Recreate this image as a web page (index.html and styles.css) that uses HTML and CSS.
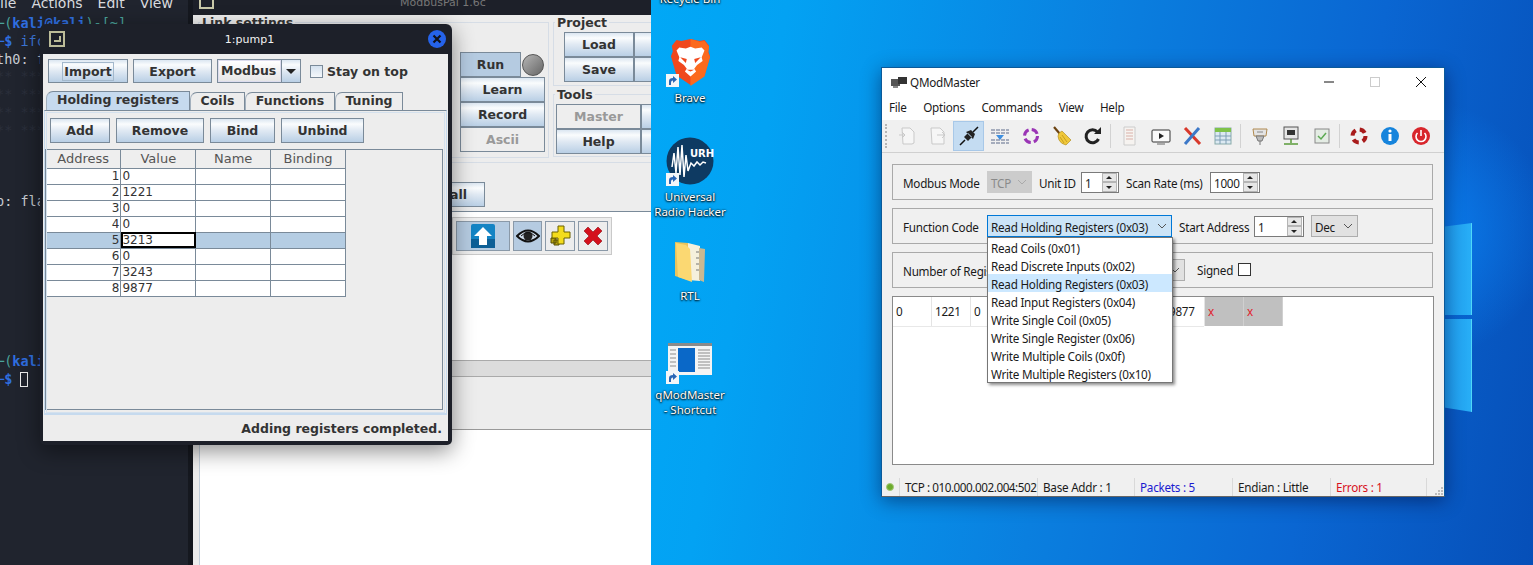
FILE: index.html
```html
<!DOCTYPE html>
<html lang="en">
<head>
    <meta charset="UTF-8">
    <title>QModMaster and ModbusPal</title>
    <link rel="stylesheet" href="styles.css">
</head>
<body>
    <svg class="defs" width="0" height="0">
        <symbol id="chev" viewBox="0 0 10 6"><path d="M1 1l4 4 4-4" fill="none" stroke="currentColor"/></symbol>
        <symbol id="shortcut" viewBox="0 0 13 13">
            <rect width="13" height="13" fill="#f4f6f8"/>
            <path d="M3 11V7q0-3 4-3V2l4 3.500L7 9V6.500q-2 0-2 2v2.500z" fill="#2a66b5"/>
        </symbol>
    </svg>

    <!-- Kali side -->
    <section class="kali">
        <div class="terminal">
            <div class="term-menu"><span>ile</span><span>Actions</span><span>Edit</span><span>View</span><span>H</span></div>
            <pre class="term-text"><span class="t-green">─(</span><span class="t-blue">kali@kali</span><span class="t-green">)-[~]</span>
<span class="t-blue">─$</span> <span class="t-dim">ifconfig</span>
th0: flags
<span class="t-faint">** ****
** ****
** ****
** ****</span>



p: flags=73








<span class="t-green">─(</span><span class="t-blue">kali@kali</span><span class="t-green">)-[~]</span>
<span class="t-blue">─$</span> <span class="cursor"></span></pre>
        </div>

        <div class="mp-window">
            <div class="mp-title">
                <span class="mp-pin"></span>
                <span class="mp-name">ModbusPal 1.6c</span>
            </div>
            <div class="mp-top">
                <fieldset class="mp-group mp-link">
                    <legend>Link settings</legend>
                    <div class="run-panel">
                        <div class="run-row">
                            <button class="jbtn is-pressed">Run</button>
                            <span class="lamp"></span>
                        </div>
                        <button class="jbtn">Learn</button>
                        <button class="jbtn">Record</button>
                        <button class="jbtn" disabled>Ascii</button>
                    </div>
                </fieldset>
                <div class="mp-side">
                    <fieldset class="mp-group mp-project">
                        <legend>Project</legend>
                        <div class="side-grid">
                            <button class="jbtn">Load</button><button class="jbtn">&nbsp;</button>
                            <button class="jbtn">Save</button><button class="jbtn">&nbsp;</button>
                        </div>
                    </fieldset>
                    <fieldset class="mp-group mp-tools">
                        <legend>Tools</legend>
                        <div class="side-grid tools-grid">
                            <button class="jbtn" disabled>Master</button><button class="jbtn">&nbsp;</button>
                            <button class="jbtn">Help</button><button class="jbtn">&nbsp;</button>
                        </div>
                    </fieldset>
                </div>
            </div>
            <div class="mp-slaves">
                <div class="mp-slaves-bar"><button class="jbtn all-btn">Enable all</button></div>
                <div class="mp-list">
                    <div class="mp-strip">
                        <button class="strip-btn wide">
                            <svg width="26" height="26" viewBox="0 0 26 26"><rect x="1" y="1" width="24" height="24" rx="2" fill="#1484c4"/><rect x="1" y="16" width="24" height="9" fill="#0d5f96"/><path d="M13 4l9 9h-5v9H9v-9H4z" fill="#fff"/></svg>
                        </button>
                        <button class="strip-btn">
                            <svg width="24" height="16" viewBox="0 0 24 16"><path d="M1 8q11-11 22 0q-11 11-22 0z" fill="#cfdcea" stroke="#111" stroke-width="2"/><circle cx="12" cy="8" r="4.500" fill="#222"/><path d="M5 8q7-7 14 0" fill="none" stroke="#111"/></svg>
                        </button>
                        <button class="strip-btn plain">
                            <svg width="24" height="24" viewBox="0 0 24 24"><path d="M6 16h5v5h-5zM3 14h5v5H3z" fill="#b8a210" stroke="#554c00"/><path d="M10 2h6v6h6v6h-6v6h-6v-6H4V8h6z" fill="#f4dc1c" stroke="#6b6000"/></svg>
                        </button>
                        <button class="strip-btn plain">
                            <svg width="22" height="22" viewBox="0 0 22 22"><path d="M2 6l4-4 5 5 5-5 4 4-5 5 5 5-4 4-5-5-5 5-4-4 5-5z" fill="#d4101c" stroke="#8d0d14" stroke-width=".6"/></svg>
                        </button>
                    </div>
                </div>
                <div class="mp-split"></div>
                <div class="mp-console"></div>
                <div class="mp-white"></div>
            </div>
        </div>

        <div class="pump-window">
            <div class="pump-title">
                <span class="pump-pin"></span>
                <span class="pump-name">1:pump1</span>
                <span class="pump-close">
                    <svg width="12" height="12" viewBox="0 0 12 12"><path d="M2.500 2.500l7 7M9.500 2.500l-7 7" stroke="#10131c" stroke-width="2.200"/></svg>
                </span>
            </div>
            <div class="pump-body">
                <div class="pump-bar">
                    <button class="jbtn is-focus"><span>Import</span></button>
                    <button class="jbtn">Export</button>
                    <div class="jcombo">
                        <span class="jcombo-text">Modbus</span>
                        <span class="jcombo-arrow"></span>
                    </div>
                    <label class="jcheck"><span class="jcheck-box"></span>Stay on top</label>
                </div>
                <div class="tabs">
                    <span class="tab is-active">Holding registers</span>
                    <span class="tab">Coils</span>
                    <span class="tab">Functions</span>
                    <span class="tab">Tuning</span>
                </div>
                <div class="tab-panel">
                    <div class="reg-bar">
                        <button class="jbtn">Add</button>
                        <button class="jbtn">Remove</button>
                        <button class="jbtn">Bind</button>
                        <button class="jbtn">Unbind</button>
                    </div>
                    <div class="reg-box">
                        <table class="reg-table">
                            <thead>
                                <tr><th>Address</th><th>Value</th><th>Name</th><th>Binding</th></tr>
                            </thead>
                            <tbody>
                                <tr><td class="num">1</td><td>0</td><td></td><td></td></tr>
                                <tr><td class="num">2</td><td>1221</td><td></td><td></td></tr>
                                <tr><td class="num">3</td><td>0</td><td></td><td></td></tr>
                                <tr><td class="num">4</td><td>0</td><td></td><td></td></tr>
                                <tr class="is-selected"><td class="num">5</td><td class="is-editing">3213</td><td></td><td></td></tr>
                                <tr><td class="num">6</td><td>0</td><td></td><td></td></tr>
                                <tr><td class="num">7</td><td>3243</td><td></td><td></td></tr>
                                <tr><td class="num">8</td><td>9877</td><td></td><td></td></tr>
                            </tbody>
                        </table>
                    </div>
                </div>
                <div class="pump-status">Adding registers completed.</div>
            </div>
        </div>
    </section>

    <!-- Windows side -->
    <section class="desktop">
        <div class="win-logo">
            <span class="pane pane-top"></span>
            <span class="pane pane-bottom"></span>
        </div>

        <div class="desk-icons">
            <div class="desk-icon">
                <span class="desk-art"></span>
                <span class="desk-label">Recycle Bin</span>
            </div>
            <div class="desk-icon">
                <span class="desk-art">
                    <svg width="41" height="48" viewBox="0 0 44 50" preserveAspectRatio="none">
                        <path d="M22 1l10 2 5-1 5 6-1 6 2 5-6 20-15 10-15-10L1 19l2-5-1-6 5-6 5 1z" fill="#f0481e"/>
                        <path d="M22 50l15-10 6-20-2-5 1-6-5-6-5 1-10-3z" fill="#fb6a1e"/>
                        <path d="M22 9l5 2 7-1 3 3-3 7 1 4-6 4-3 4 2 3-6 5-6-5 2-3-3-4-6-4 1-4-3-7 3-3 7 1z" fill="#fff"/>
                        <path d="M11 20l7 2-1 4zM33 20l-7 2 1 4zM18 33h8l-4 2z" fill="#f0481e"/>
                    </svg>
                    <svg class="shortcut"><use href="#shortcut"/></svg>
                </span>
                <span class="desk-label">Brave</span>
            </div>
            <div class="desk-icon">
                <span class="desk-art">
                    <svg width="48" height="48" viewBox="0 0 48 48">
                        <circle cx="24" cy="24" r="23.500" fill="#0e3a62"/>
                        <path d="M6 30l2-14 2 20 2-26 2 28 2-30 2 32 2-22 2 16 3-8 3 3 3-4 3 3 3-3 3 1" fill="none" stroke="#fff" stroke-width="1.500"/>
                        <text class="urh-text" x="24" y="20">URH</text>
                    </svg>
                    <svg class="shortcut"><use href="#shortcut"/></svg>
                </span>
                <span class="desk-label">Universal<br>Radio Hacker</span>
            </div>
            <div class="desk-icon">
                <span class="desk-art art-folder">
                    <svg width="34" height="44" viewBox="0 0 34 44">
                        <path d="M2 2l13 1v37L2 36z" fill="#e9c35c"/>
                        <path d="M15 3l12 3v35l-12-1z" fill="#f5f0dc"/>
                        <path d="M26 8l6 1-1 33-5-2z" fill="#c9b892"/>
                        <path d="M3 3l10 2 4 4 2 33-14-5z" fill="#fbd872"/>
                        <path d="M23 12h3M23 18h3M23 24h3M23 30h3" stroke="#777"/>
                    </svg>
                </span>
                <span class="desk-label">RTL</span>
            </div>
            <div class="desk-icon">
                <span class="desk-art">
                    <svg width="44" height="32" viewBox="0 0 44 32">
                        <rect width="44" height="32" fill="#f4f4f4"/>
                        <rect width="44" height="3" fill="#8a8a8a"/>
                        <rect x="10" y="5" width="17" height="24" fill="#0a68c8"/>
                        <path d="M2 7h6M2 11h6M2 15h6M2 19h6M2 23h6M30 7h12M30 10h12M30 13h12M30 16h12M30 19h12M30 22h12M30 25h12" stroke="#8c8c8c"/>
                    </svg>
                    <svg class="shortcut"><use href="#shortcut"/></svg>
                </span>
                <span class="desk-label">qModMaster<br>- Shortcut</span>
            </div>
        </div>

        <div class="qm-window">
            <div class="qm-title">
                <svg width="16" height="12" viewBox="0 0 16 12"><rect x="0" y="3" width="9" height="7" fill="#555"/><rect x="7" y="1" width="9" height="7" fill="#333"/><rect x="2" y="10" width="5" height="2" fill="#888"/></svg>
                <span class="qm-name">QModMaster</span>
                <span class="caption">
                    <svg width="12" height="12" viewBox="0 0 12 12"><path d="M1 6h10" stroke="#111"/></svg>
                </span>
                <span class="caption">
                    <svg width="12" height="12" viewBox="0 0 12 12"><rect x="1.500" y="1.500" width="9" height="9" fill="none" stroke="#ccc"/></svg>
                </span>
                <span class="caption">
                    <svg width="12" height="12" viewBox="0 0 12 12"><path d="M1 1l10 10M11 1L1 11" stroke="#111"/></svg>
                </span>
            </div>
            <div class="qm-menu">
                <span>File</span><span>Options</span><span>Commands</span><span>View</span><span>Help</span>
            </div>
            <div class="qm-tools">
                <span class="grip"></span>
                <span class="tool">
                    <svg viewBox="0 0 20 20"><path d="M5 2h8l4 4v11l-2 1H6zM2 9h6M5 6l3 3-3 3" fill="#f6f6f6" stroke="#c9c9c9"/></svg>
                </span>
                <span class="tool">
                    <svg viewBox="0 0 20 20"><path d="M3 2h9l4 4v12H4zM9 9h8M14 6l3 3-3 3" fill="#f6f6f6" stroke="#c9c9c9"/></svg>
                </span>
                <span class="tool is-on">
                    <svg viewBox="0 0 20 20"><path d="M1 19l5-5M14 6l5-5" stroke="#111" stroke-width="1.500"/><path d="M5 11l4-4 4 4-4 4zM8 14l-3-3 2-2 4 4zM7 6l7 7 2-5-4-4z" fill="#222"/></svg>
                </span>
                <span class="tool">
                    <svg viewBox="0 0 20 20"><path d="M1 4h18M1 7h18M1 14h18M1 17h18" stroke="#5d6b8a" stroke-dasharray="4 1"/><path d="M6 9h8l-4 5z" fill="#3f8fe0"/></svg>
                </span>
                <span class="tool">
                    <svg viewBox="0 0 20 20"><circle cx="10" cy="10" r="6.500" fill="none" stroke="#9a35b5" stroke-width="3" stroke-dasharray="7 3.200"/></svg>
                </span>
                <span class="tool">
                    <svg viewBox="0 0 20 20"><path d="M2 1l6 7" stroke="#6b4210" stroke-width="2.200"/><path d="M7 7l3-2 9 9-5 5q-5-1-7-5t0-7z" fill="#f0c83a" stroke="#a8851c" stroke-width=".6"/><path d="M10 9l5 7M8 11l4 6" stroke="#c79f22"/></svg>
                </span>
                <span class="tool">
                    <svg viewBox="0 0 20 20"><path d="M15.500 13a6.500 6.500 0 1 1-1-7" fill="none" stroke="#222" stroke-width="3"/><path d="M11 8h7V1z" fill="#222"/></svg>
                </span>
                <span class="tool-sep"></span>
                <span class="tool">
                    <svg viewBox="0 0 20 20"><path d="M4 1h11v18H4z" fill="#f6f3f0" stroke="#ccc"/><path d="M6 4h7M6 7h7M6 10h7M6 13h7" stroke="#d9b0a8"/></svg>
                </span>
                <span class="tool">
                    <svg viewBox="0 0 20 20"><rect x="1" y="4" width="18" height="12" rx="1" fill="#fafafa" stroke="#333"/><path d="M8 7l5 3-5 3z" fill="#222"/><path d="M6 18h8" stroke="#666"/></svg>
                </span>
                <span class="tool">
                    <svg viewBox="0 0 20 20"><path d="M3 2l15 16" stroke="#d8392c" stroke-width="3"/><path d="M17 2L3 18" stroke="#3c78c8" stroke-width="3"/></svg>
                </span>
                <span class="tool">
                    <svg viewBox="0 0 20 20"><rect x="2" y="2" width="16" height="16" fill="#dce9f2" stroke="#8aa"/><rect x="2" y="2" width="16" height="4" fill="#7fc24a"/><path d="M2 10h16M2 14h16M7 6v12M13 6v12" stroke="#7f9fb5"/></svg>
                </span>
                <span class="tool-sep"></span>
                <span class="tool">
                    <svg viewBox="0 0 20 20"><path d="M3 3h14l-1 7H4z" fill="#e3e3e3" stroke="#b08a50"/><path d="M6 10h8l-2 5h-4zM10 15v4" fill="#bbb" stroke="#777"/><path d="M7 6h6" stroke="#888"/></svg>
                </span>
                <span class="tool">
                    <svg viewBox="0 0 20 20"><rect x="3" y="1" width="14" height="12" fill="#e6e6e6" stroke="#555"/><rect x="6" y="4" width="8" height="5" fill="#333"/><path d="M10 13v4M3 18h14" stroke="#5a9a3a" stroke-width="1.500"/></svg>
                </span>
                <span class="tool">
                    <svg viewBox="0 0 20 20"><rect x="3" y="3" width="14" height="14" fill="#e4ece4" stroke="#888"/><path d="M6 10l3 3 5-6" fill="none" stroke="#5caa52" stroke-width="1.500"/></svg>
                </span>
                <span class="tool-sep"></span>
                <span class="tool">
                    <svg viewBox="0 0 20 20"><circle cx="10" cy="10" r="6.500" fill="none" stroke="#f4f4f4" stroke-width="4"/><circle cx="10" cy="10" r="6.500" fill="none" stroke="#a81c1c" stroke-width="4" stroke-dasharray="6 4.200"/></svg>
                </span>
                <span class="tool">
                    <svg viewBox="0 0 20 20"><circle cx="10" cy="10" r="9" fill="#1684dc"/><path d="M10 8v7" stroke="#fff" stroke-width="3"/><circle cx="10" cy="5" r="1.600" fill="#fff"/></svg>
                </span>
                <span class="tool">
                    <svg viewBox="0 0 20 20"><circle cx="10" cy="10" r="9" fill="#d8262c"/><path d="M6.500 7a5 5 0 1 0 7 0" fill="none" stroke="#fff" stroke-width="1.600"/><path d="M10 4v6" stroke="#fff" stroke-width="1.600"/></svg>
                </span>
            </div>

            <div class="qm-body">
                <div class="qm-row">
                    <span class="lbl-first">Modbus Mode</span>
                    <div class="combo combo-off combo-mode"><span>TCP</span><svg class="chev"><use href="#chev"/></svg></div>
                    <span class="lbl-unit">Unit ID</span>
                    <div class="spin spin-unit"><span>1</span><span class="spin-btns"><i class="up"></i><i class="down"></i></span></div>
                    <span class="lbl-scan">Scan Rate (ms)</span>
                    <div class="spin spin-wide"><span>1000</span><span class="spin-btns"><i class="up"></i><i class="down"></i></span></div>
                </div>
                <div class="qm-row">
                    <span class="lbl-first">Function Code</span>
                    <div class="combo-wrap">
                        <div class="combo combo-open"><span>Read Holding Registers (0x03)</span><svg class="chev"><use href="#chev"/></svg></div>
                        <ul class="combo-list">
                            <li>Read Coils (0x01)</li>
                            <li>Read Discrete Inputs (0x02)</li>
                            <li class="is-hover">Read Holding Registers (0x03)</li>
                            <li>Read Input Registers (0x04)</li>
                            <li>Write Single Coil (0x05)</li>
                            <li>Write Single Register (0x06)</li>
                            <li>Write Multiple Coils (0x0f)</li>
                            <li>Write Multiple Registers (0x10)</li>
                        </ul>
                    </div>
                    <span class="lbl-start">Start Address</span>
                    <div class="spin spin-wide"><span>1</span><span class="spin-btns"><i class="up"></i><i class="down"></i></span></div>
                    <div class="combo combo-dec"><span>Dec</span><svg class="chev"><use href="#chev"/></svg></div>
                </div>
                <div class="qm-row">
                    <span class="lbl-first lbl-clip">Number of Registers</span>
                    <div class="combo combo-regs"><span></span><svg class="chev"><use href="#chev"/></svg></div>
                    <span class="signed">Signed</span>
                    <span class="check"></span>
                </div>
                <div class="qm-data">
                    <div class="data-row">
                        <span>0</span><span>1221</span><span>0</span><span></span><span></span><span></span><span></span><span class="cell-end">9877</span>
                        <span class="is-err">x</span><span class="is-err">x</span>
                    </div>
                </div>
            </div>

            <div class="qm-status">
                <span class="led"></span>
                <span class="st st-conn">TCP : 010.000.002.004:502</span>
                <span class="st st-base">Base Addr : 1</span>
                <span class="st st-packets">Packets : 5</span>
                <span class="st st-endian">Endian : Little</span>
                <span class="st st-errors">Errors : 1</span>
                <span class="st st-grip">
                    <svg width="8" height="8" viewBox="0 0 8 8"><path d="M6 0h2v2H6zM3 3h2v2H3zM6 3h2v2H6zM0 6h2v2H0zM3 6h2v2H3zM6 6h2v2H6z" fill="#bcbcbc"/></svg>
                </span>
            </div>
        </div>
    </section>
</body>
</html>
```

FILE: styles.css
```css
* {
    box-sizing: border-box;
}

html, body {
    height: 100%;
}

body {
    margin: 0;
    display: flex;
    overflow: hidden;
    background-color: #20242e;
    font-family: "Noto Sans", sans-serif;
}

.defs {
    position: absolute;
}

/* Kali side */
.kali {
    position: relative;
    width: 651px;
    height: 565px;
    flex: none;
    overflow: hidden;
    background-color: #20242e;
}

.terminal {
    width: 190px;
    height: 565px;
    color: #c8ccd2;
}

.term-menu {
    display: flex;
    gap: 15px;
    height: 10px;
    font: 14px "DejaVu Sans", sans-serif;
    line-height: 6px;
    color: #d8dade;
    overflow: hidden;
    white-space: nowrap;
}

.term-text {
    margin: 5px 0 0 -4px;
    font: 13.500px/17.800px "DejaVu Sans Mono", monospace;
}

.t-green { color: #4aa39a; }
.t-blue { color: #2f6fe0; font-weight: bold; }
.t-dim { color: #3d77d8; }
.t-faint { color: #2a2f3b; }

.cursor {
    display: inline-block;
    width: 8px;
    height: 15px;
    border: 1px solid #eee;
    vertical-align: -3px;
}

/* ModbusPal window */
.mp-window {
    position: absolute;
    left: 188px;
    top: 0;
    width: 470px;
    height: 565px;
    display: flex;
    flex-direction: column;
    background-color: #ededed;
    border-left: 5px solid #15181f;
    font: bold 12.500px "DejaVu Sans", sans-serif;
    color: #333;
}

.mp-title {
    display: flex;
    height: 15px;
    flex: none;
    padding-left: 6px;
    background-color: #1d2029;
    overflow: hidden;
}

.mp-pin {
    width: 15px;
    height: 9px;
    border: 2px solid #c8c8a8;
    border-top: 0;
}

.mp-name {
    margin-left: 186px;
    font-weight: normal;
    font-size: 11px;
    line-height: 5px;
    color: #777;
}

.mp-top {
    display: flex;
    flex: none;
    height: 147px;
    padding: 0 0 0 5px;
    gap: 4px;
}

.mp-group {
    margin: 0;
    border: 1px solid #d6dde6;
    padding: 0;
    min-width: 0;
    flex: none;
}

.mp-group legend {
    padding: 0 2px;
    margin-left: 1px;
    font-size: 12.500px;
    line-height: 15px;
}

.mp-link {
    width: 351px;
    height: 143px;
    display: flex;
    justify-content: flex-end;
}

.run-panel {
    width: 85px;
    margin: 22px 3px 0 auto;
    display: flex;
    flex-direction: column;
}

.run-row {
    display: flex;
    align-items: center;
    gap: 1px;
}

.run-row .jbtn {
    width: 61px;
}

.lamp {
    width: 22px;
    height: 22px;
    border-radius: 50%;
    border: 1px solid #555;
    background: linear-gradient(135deg, #b5b5b5, #666);
}

.jbtn {
    height: 25px;
    padding: 0;
    border: 1px solid #7a8a99;
    background: linear-gradient(#dbe6f1 0%, #fafcfd 22%, #e0e9f3 50%, #b9cfe5 100%);
    font: bold 12.500px "DejaVu Sans", sans-serif;
    color: #333;
    white-space: nowrap;
    overflow: hidden;
}

.jbtn:disabled {
    background: #eeeeee;
    color: #999;
}

.jbtn.is-pressed {
    background: #b5cbe1;
}

.jbtn.is-focus span {
    border: 1px solid #a3b8cc;
    padding: 1px;
}

.mp-side {
    width: 130px;
    flex: none;
    display: flex;
    flex-direction: column;
    gap: 1px;
}

.mp-project {
    height: 71px;
}

.mp-tools {
    height: 70px;
}

.side-grid {
    display: grid;
    grid-template-columns: 70px 70px;
    margin: 2px 0 0 10px;
}

.tools-grid {
    grid-template-columns: 85px 70px;
    margin: 2px 0 0 2px;
}

.mp-slaves {
    flex: 1;
    display: flex;
    flex-direction: column;
    min-height: 0;
}

.mp-slaves-bar {
    height: 50px;
    flex: none;
    border-top: 1px solid #d6dde6;
    border-bottom: 1px solid #7a8a99;
    padding: 19px 0 0 187px;
}

.all-btn {
    width: 105px;
}

.mp-list {
    height: 148px;
    flex: none;
    margin-left: 6px;
    background-color: #fff;
    padding: 5px 0 0 253px;
}

.mp-strip {
    display: flex;
    gap: 3px;
    width: 160px;
    height: 38px;
    padding: 3px;
    background-color: #ededed;
    border: 1px solid #c9c9c9;
}

.strip-btn {
    display: flex;
    align-items: center;
    justify-content: center;
    width: 30px;
    padding: 0;
    border: 1px solid #8a99a8;
    background-color: #b5cbe1;
}

.strip-btn.wide {
    width: 54px;
}

.strip-btn.plain {
    background-color: #ededed;
}

.mp-split {
    height: 17px;
    flex: none;
    background-color: #dcdcdc;
    border-top: 1px solid #aaa;
    border-bottom: 1px solid #aaa;
}

.mp-console {
    height: 53px;
    flex: none;
    border-bottom: 1px solid #999;
}

.mp-white {
    flex: 1;
    margin-left: 6px;
    background-color: #fff;
    border-left: 1px solid #c3cfdb;
}

/* pump1 window */
.pump-window {
    position: absolute;
    left: 40px;
    top: 24px;
    width: 412px;
    height: 421px;
    display: flex;
    flex-direction: column;
    padding: 0 4px 4px 3px;
    background-color: #1d2029;
    border-radius: 6px 6px 5px 5px;
    box-shadow: 0 6px 22px rgba(0, 0, 0, 0.45);
    color: #333;
    font: bold 12.500px "DejaVu Sans", sans-serif;
}

.pump-title {
    display: flex;
    align-items: center;
    height: 30px;
    flex: none;
    padding: 0 2px 0 6px;
}

.pump-pin {
    position: relative;
    width: 16px;
    height: 16px;
    border: 2px solid #bcbc98;
}

.pump-pin::after {
    content: "";
    position: absolute;
    right: 2px;
    bottom: 3px;
    width: 5px;
    height: 4px;
    border: solid #bcbc98;
    border-width: 0 2px 2px 0;
}

.pump-name {
    flex: 1;
    margin-left: 6px;
    text-align: center;
    font-size: 11px;
    font-weight: normal;
    color: #f2f2f2;
}

.pump-close {
    display: flex;
    align-items: center;
    justify-content: center;
    width: 18px;
    height: 18px;
    border-radius: 50%;
    background-color: #2563eb;
}

.pump-body {
    flex: 1;
    display: flex;
    flex-direction: column;
    background-color: #ededed;
    min-height: 0;
}

.pump-bar {
    display: grid;
    grid-template-columns: 80px 79px 84px auto;
    gap: 5px;
    align-items: start;
    height: 37px;
    flex: none;
    padding: 5px 5px 0;
}

.pump-bar .jbtn {
    height: 24px;
}

.jcombo {
    display: flex;
    height: 24px;
    border: 1px solid #7a8a99;
}

.jcombo-text {
    flex: 1;
    padding-left: 2px;
    line-height: 19px;
    background: linear-gradient(#fff, #e6e6e6);
    border: 1px solid #dde;
}

.jcombo-arrow {
    position: relative;
    width: 19px;
    border-left: 1px solid #7a8a99;
    background: linear-gradient(#dbe6f1 0%, #fafcfd 22%, #e0e9f3 50%, #b9cfe5 100%);
}

.jcombo-arrow::after {
    content: "";
    position: absolute;
    left: 4px;
    top: 9px;
    border: 5px solid transparent;
    border-top-color: #222;
}

.jcheck {
    display: flex;
    align-items: center;
    gap: 4px;
    height: 24px;
    margin-left: 4px;
    white-space: nowrap;
}

.jcheck-box {
    width: 13px;
    height: 13px;
    border: 1px solid #7a8a99;
    background: linear-gradient(#d5e2ef, #f4f7fa);
}

.tabs {
    display: flex;
    height: 19px;
    flex: none;
    padding-left: 3px;
    align-items: flex-end;
}

.tab {
    width: 55px;
    height: 18px;
    text-align: center;
    line-height: 15px;
    border: 1px solid #7a8a99;
    border-bottom: 0;
    border-left-color: #a3b0bd;
    border-top-left-radius: 7px;
}

.tab:nth-child(1) {
    width: 144px;
    height: 19px;
    background-color: #c6daee;
}

.tab:nth-child(3) {
    width: 90px;
}

.tab:nth-child(4) {
    width: 68px;
}

.tab-panel {
    flex: 1;
    min-height: 0;
    display: flex;
    flex-direction: column;
    margin: 0 1px;
    padding: 2px 2px 2px 0;
    border: 1px solid #c6daee;
    border-top: 1px solid #7a8a99;
    border-bottom: 2px solid #c6daee;
    outline: 1px solid #d4e1ee;
    outline-offset: -3px;
}

.reg-bar {
    display: grid;
    grid-template-columns: 60px 88px 65px 83px;
    gap: 6px;
    flex: none;
    height: 36px;
    padding: 5px 0 0 5px;
}

.reg-bar .jbtn {
    height: 25px;
}

.reg-box {
    flex: 1;
    min-height: 0;
    margin-right: 1px;
    border: 1px solid #7a8a99;
    margin-bottom: 1px;
}

.reg-table {
    width: 300px;
    border-collapse: collapse;
    table-layout: fixed;
    font: 12px "DejaVu Sans", sans-serif;
}

.reg-table th {
    height: 18px;
    padding: 0;
    font-size: 13px;
    font-weight: normal;
    color: #555;
    background-color: #eeeeee;
    border: 1px solid #7a8a99;
    border-top: 0;
    border-left: 0;
}

.reg-table td {
    height: 16px;
    padding: 0 1px;
    line-height: 14px;
    color: #333;
    background-color: #fff;
    border: 1px solid #7a8a99;
    border-left: 0;
}

.reg-table td.num {
    text-align: right;
}

.is-selected td {
    background-color: #b5cde3;
}

.reg-table td.is-editing {
    background-color: #fff;
    outline: 2px solid #000;
    outline-offset: -2px;
}

.pump-status {
    height: 26px;
    flex: none;
    padding-right: 6px;
    line-height: 27px;
    text-align: right;
}

/* Windows desktop */
.desktop {
    position: relative;
    flex: 1;
    height: 565px;
    overflow: hidden;
    background:
        radial-gradient(circle at 770px 230px, #0a7ff0 0, rgba(10, 127, 240, 0) 130px),
        linear-gradient(100deg, #01a8f6 0, #03a2f3 14%, #0a7fdf 48%, #0a66d2 75%, #064fb8 100%);
}

.win-logo {
    position: absolute;
    left: 790px;
    top: 223px;
    width: 31px;
    height: 190px;
}

.pane {
    position: absolute;
    right: 0;
    width: 100%;
    background: linear-gradient(90deg, #1e9bf0, #28aef6);
    border-right: 1px solid #4fd8f8;
}

.pane-top {
    top: 0;
    height: 92px;
    clip-path: polygon(0 4px, 100% 0, 100% 100%, 0 100%);
}

.pane-bottom {
    top: 96px;
    height: 93px;
    clip-path: polygon(0 0, 100% 0, 100% 100%, 0 88px);
}

.desk-icons {
    position: absolute;
    left: 0;
    top: -62px;
    display: grid;
    grid-auto-rows: 99px;
    width: 78px;
}

.desk-icon {
    display: flex;
    flex-direction: column;
    align-items: center;
}

.desk-art {
    position: relative;
    display: flex;
    align-items: center;
    justify-content: center;
    width: 48px;
    height: 50px;
    flex: none;
}

.art-folder svg {
    margin-top: 3px;
}

.shortcut {
    position: absolute;
    left: 0;
    bottom: 0;
    width: 13px;
    height: 13px;
}

.urh-text {
    font: bold 10px "DejaVu Sans", sans-serif;
    fill: #fff;
}

.desk-label {
    margin-top: 3px;
    font-size: 11.500px;
    line-height: 15px;
    color: #fff;
    text-align: center;
    white-space: nowrap;
    text-shadow: 0 1px 2px #000, 0 0 2px #000;
}

/* QModMaster window */
.qm-window {
    position: absolute;
    left: 230px;
    top: 67px;
    width: 564px;
    height: 430px;
    display: flex;
    flex-direction: column;
    background-color: #f0f0f0;
    border: 1px solid #0b5a9a;
    border-bottom-color: #666;
    box-shadow: 0 4px 18px rgba(0, 0, 40, 0.45);
    font-size: 11.700px;
    letter-spacing: -0.250px;
    color: #1a1a1a;
}

.qm-title {
    display: flex;
    align-items: center;
    height: 28px;
    flex: none;
    padding-left: 9px;
    background-color: #fff;
}

.qm-name {
    flex: 1;
    margin-left: 3px;
}

.caption {
    display: flex;
    align-items: center;
    justify-content: center;
    width: 46px;
    height: 28px;
}

.qm-menu {
    display: flex;
    gap: 16.500px;
    height: 24px;
    flex: none;
    padding: 3px 0 0 7px;
    background-color: #fff;
}

.qm-tools {
    display: flex;
    align-items: center;
    height: 33px;
    flex: none;
    padding-left: 3px;
    border-bottom: 1px solid #d0d0d0;
}

.grip {
    width: 2px;
    height: 24px;
    margin-right: 4px;
    border-left: 2px dotted #b5b5b5;
}

.tool {
    display: flex;
    align-items: center;
    justify-content: center;
    width: 31px;
    height: 30px;
}

.tool svg {
    width: 20px;
    height: 20px;
}

.tool.is-on {
    background-color: #c4dcf2;
    border: 1px solid #a8c8e8;
}

.tool-sep {
    width: 1px;
    height: 24px;
    margin: 0 3px 0 2px;
    background-color: #d2d2d2;
    flex: none;
}

.qm-body {
    flex: 1;
    display: flex;
    flex-direction: column;
    gap: 8px;
    padding: 11px 11px 0 10px;
    min-height: 0;
}

.qm-row {
    display: flex;
    align-items: center;
    gap: 7px;
    height: 36px;
    flex: none;
    padding-left: 10px;
    border: 1px solid #a9a9a9;
}

.qm-row > span,
.combo > span,
.spin > span:first-child {
    padding-top: 2px;
    white-space: nowrap;
}

.lbl-first {
    width: 77px;
    flex: none;
}

.lbl-clip {
    width: 84px;
    margin-right: -7px;
    overflow: hidden;
}

.lbl-unit {
    width: 35px;
}

.lbl-scan {
    width: 77px;
}

.lbl-start {
    width: 68px;
}

.combo {
    display: flex;
    align-items: center;
    justify-content: space-between;
    height: 22px;
    padding: 0 4px 0 3px;
    border: 1px solid #adadad;
    background-color: #e1e1e1;
}

.chev {
    width: 10px;
    height: 6px;
    color: #555;
    flex: none;
}

.combo-mode {
    width: 45px;
    background-color: #cccccc;
    color: #8a8a8a;
    border-color: #ccc;
}

.combo-off .chev {
    color: #aaa;
}

.combo-wrap {
    position: relative;
    width: 185px;
}

.combo-open {
    background-color: #cce4f7;
    border-color: #0078d7;
}

.combo-dec {
    width: 47px;
}

.combo-regs {
    width: 90px;
    margin-left: 108px;
}

.combo-list {
    position: absolute;
    left: 0;
    top: 22px;
    z-index: 5;
    width: 186px;
    margin: 0;
    padding: 0;
    list-style: none;
    background-color: #fff;
    border: 1px solid #767676;
    box-shadow: 2px 2px 3px rgba(0, 0, 0, 0.45);
}

.combo-list li {
    height: 18px;
    padding-left: 3px;
    line-height: 20px;
    white-space: nowrap;
}

.combo-list .is-hover {
    background-color: #cce8ff;
}

.spin {
    display: flex;
    align-items: center;
    justify-content: space-between;
    height: 21px;
    padding-left: 3px;
    border: 1px solid #7a7a7a;
    background-color: #fff;
}

.spin-unit {
    width: 38px;
}

.spin-wide {
    width: 50px;
}

.spin-btns {
    display: flex;
    flex-direction: column;
    width: 15px;
    height: 19px;
    margin-right: 1px;
}

.spin-btns i {
    position: relative;
    flex: 1;
    background-color: #e6e6e6;
    border: 1px solid #b5b5b5;
}

.spin-btns i::after {
    content: "";
    position: absolute;
    left: 3px;
    border: 3px solid transparent;
}

.spin-btns .up::after {
    top: -1px;
    border-bottom: 3px solid #222;
}

.spin-btns .down::after {
    top: 3px;
    border-top: 3px solid #222;
}

.qm-row > .signed {
    width: 34px;
    margin-left: 5px;
    padding-top: 0;
}

.qm-row > .check {
    width: 13px;
    height: 13px;
    margin-top: -1px;
    padding: 0;
    border: 1px solid #333;
    background-color: #fff;
}

.qm-data {
    flex: none;
    height: 169px;
    width: 542px;
    background-color: #fff;
    border: 1px solid #8a8a8a;
}

.data-row {
    display: flex;
    height: 29px;
    width: 311px;
    box-shadow: 0 1px 0 #e8e8e8;
}

.data-row span {
    width: 39px;
    flex: none;
    padding-left: 3px;
    line-height: 29px;
    border-right: 1px solid #e4e4e4;
}

.data-row .is-err {
    background-color: #c0c0c0;
    color: #e0202c;
    border-right-color: #d0d0d0;
}

.qm-status {
    display: flex;
    align-items: center;
    height: 32px;
    flex: none;
    padding: 14px 0 0 4px;
}

.led {
    width: 8px;
    height: 8px;
    margin-right: 5px;
    border-radius: 50%;
    background-color: #6cab2c;
    border: 1px solid #a4c87a;
}

.st {
    height: 18px;
    line-height: 18px;
    padding-left: 5px;
    border-left: 1px solid #d9d9d9;
    white-space: nowrap;
    flex: none;
}

.st-conn { width: 138px; letter-spacing: -0.450px; }
.st-base { width: 97px; }
.st-packets { width: 98px; color: #1a1ad0; }
.st-endian { width: 98px; }
.st-errors { width: 96px; color: #d8101c; }

.st-grip {
    display: flex;
    align-items: flex-end;
    justify-content: flex-end;
    width: 18px;
    padding: 0 1px 1px 0;
}
```
